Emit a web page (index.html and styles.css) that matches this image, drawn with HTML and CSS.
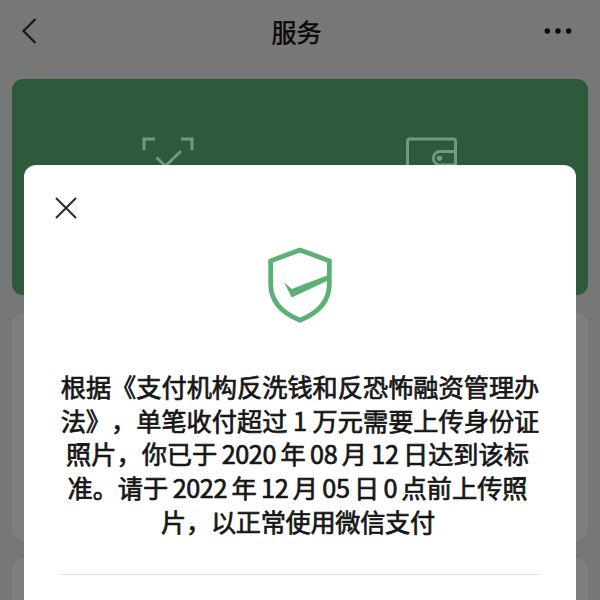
FILE: index.html
```html
<!DOCTYPE html>
<html lang="zh-CN">
<head>
<meta charset="utf-8">
<title>服务</title>
<link rel="stylesheet" href="styles.css">
</head>
<body>
<div class="screen">
  <header class="navbar">
    <svg class="back" width="18" height="30" viewBox="0 0 18 30"><path d="M15.5 3 3.500 15l12 12"/></svg>
    <h1 class="title">服务</h1>
    <svg class="more" width="30" height="8" viewBox="0 0 30 8"><circle cx="4.3" cy="4" r="2.7"/><circle cx="15" cy="4" r="2.7"/><circle cx="25.7" cy="4" r="2.7"/></svg>
  </header>
  <main class="services">
    <section class="pay-card">
      <div class="entry entry-scan">
        <svg width="56" height="54" viewBox="0 0 56 54"><path d="M4 14V3h11M41 3h11v11M4 39v11h11M41 50h11V39M16.500 21.500l9 8.500 15.500-15"/></svg>
      </div>
      <div class="entry entry-wallet">
        <svg width="56" height="54" viewBox="0 0 56 54"><rect x="3.5" y="3" width="48" height="42" rx="2"/><path d="M51.5 15.5H36a6.7 6.7 0 0 0 0 13.4h15.5"/><circle class="dot" cx="35.5" cy="22.3" r="2.7"/></svg>
      </div>
    </section>
    <section class="panel"></section>
    <section class="panel"></section>
  </main>
</div>
<div class="dialog" role="dialog">
  <svg class="close" width="24" height="24" viewBox="0 0 24 24"><path d="m2 2 20 20M22 2 2 22"/></svg>
  <svg class="shield" width="70" height="80" viewBox="0 0 70 80">
    <path class="outline" d="M35 5 5.700 15.800V39C5.700 56 17 68 35 75.200 53 68 64.300 56 64.300 39V15.800Z"/>
    <path class="tick" d="m19 37.300 7.700 6.700L64 29.700V35L26.700 52.500Z"/>
  </svg>
  <p class="message">
    <span class="line">根据《支付机构反洗钱和反恐怖融资管理办</span>
    <span class="line">法》，单笔收付超过 1 万元需要上传身份证</span>
    <span class="line dated">照片，你已于 <span class="num">2020</span> 年 <span class="num">08</span> 月 <span class="num">12</span> 日达到该标</span>
    <span class="line dated">准。请于 <span class="num">2022</span> 年 <span class="num">12</span> 月 <span class="num">05</span> 日 <span class="num">0</span> 点前上传照</span>
    <span class="line last">片，以正常使用微信支付</span>
  </p>
  <hr class="rule">
</div>
</body>
</html>
```
FILE: styles.css
```css
* { box-sizing: border-box; }

body {
  margin: 0;
  width: 600px;
  height: 600px;
  overflow: hidden;
  position: relative;
  background: #777;
  font-family: "Noto Sans CJK SC", sans-serif;
  text-spacing-trim: space-all;
}

.screen { height: 600px; overflow: hidden; }

.navbar {
  height: 79px;
  padding: 0 27px 18px 20px;
  display: grid;
  grid-template-columns: 60px 1fr 60px;
  align-items: center;
}

.back { fill: none; stroke: #191919; stroke-width: 2.200; }

.title {
  margin: 0;
  text-align: center;
  font-size: 25px;
  line-height: 36px;
  font-weight: 400;
  color: #080808;
  -webkit-text-stroke: 0.500px #080808;
}

.more { justify-self: end; fill: #080808; }

.services { padding: 0 12px; }

.pay-card {
  height: 216px;
  border-radius: 11px;
  background: #2d5a3a;
  display: grid;
  grid-template-columns: 1fr 1fr;
  padding: 57px 24px 0;
}

.entry { text-align: center; }
.entry svg { fill: none; stroke: #75977c; stroke-width: 3; }
.entry .dot { fill: #75977c; stroke: none; }

.panel {
  height: 227px;
  margin-top: 18px;
  border-radius: 11px;
  background: #7e7e7e;
}

.dialog {
  position: absolute;
  left: 24px;
  top: 165px;
  width: 552px;
  height: 450px;
  padding: 31px 36px 0;
  border-radius: 12px;
  background: #fff;
  display: flex;
  flex-direction: column;
  align-items: center;
}

.close {
  align-self: flex-start;
  margin-left: -6px;
  fill: none;
  stroke: #2b2b2b;
  stroke-width: 2;
}

.shield { margin-top: 25px; }
.outline { fill: none; stroke: #5bb174; stroke-width: 4.800; }
.tick { fill: #5bb174; }

.message {
  margin: 45px 0 0;
  font-size: 25.200px;
  line-height: 33.700px;
  color: #161616;
  -webkit-text-stroke: 0.700px #161616;
}

.line { display: block; text-align: center; white-space: nowrap; }
.dated { padding-right: 5px; word-spacing: -1.200px; }
.num { letter-spacing: -0.400px; }
.last { padding-right: 4px; letter-spacing: -0.300px; }

.rule {
  width: 480px;
  margin: 35px 0 0;
  border: 0;
  border-top: 1px solid #e4e4e4;
}
```
